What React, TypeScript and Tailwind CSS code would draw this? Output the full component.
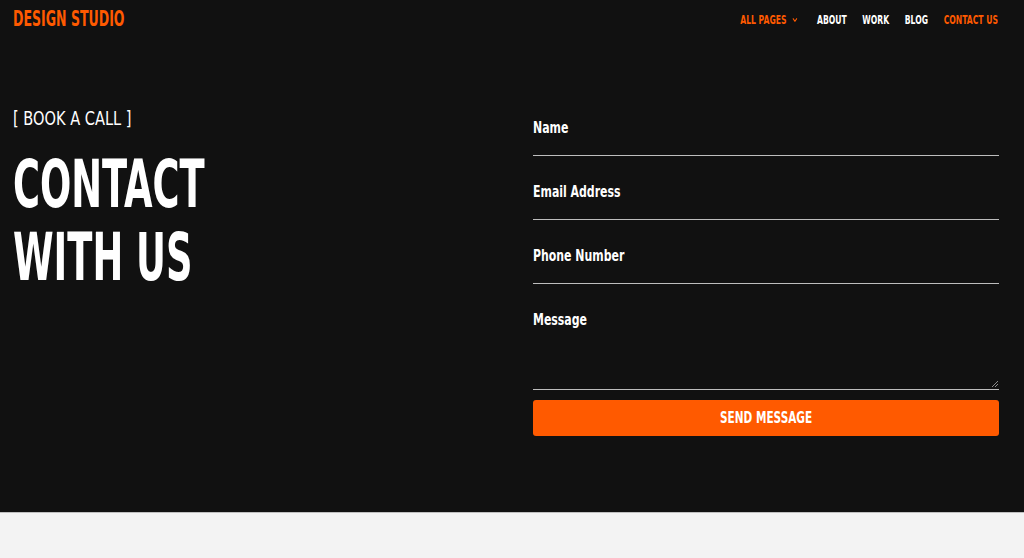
import { ChevronDown } from 'lucide-react';

const font = { fontFamily: '"DejaVu Sans Condensed", "Liberation Sans", sans-serif' };

function Field({ label, tall }: { label: string; tall?: boolean }) {
  return (
    <label
      className={`relative flex flex-col border-b border-[#bdbdbd] ${tall ? 'h-[80px]' : 'h-[38px]'}`}
    >
      <span className="inline-block origin-left scale-x-[0.76] text-[16px] leading-[20px] font-bold text-white whitespace-nowrap">
        {label}
      </span>
      {tall && (
        <svg className="absolute right-[1px] bottom-[2px] w-[6px] h-[6px]" viewBox="0 0 6 6">
          <path d="M6 0 L0 6 M6 3 L3 6" stroke="#8a8a8a" strokeWidth="1" />
        </svg>
      )}
    </label>
  );
}

export default function App() {
  return (
    <div className="w-[1024px] h-[558px] bg-[#f3f3f3] overflow-hidden" style={font}>
      <div className="h-[513px] bg-[#111111] border-b border-[#bfbfbf] flex flex-col">
        <header className="h-[40px] pl-[13px] pr-[26px] flex items-center justify-between">
          <div className="inline-block origin-left scale-x-[0.665] text-[21px] font-bold text-[#ff5a00] whitespace-nowrap">
            DESIGN STUDIO
          </div>
          <nav className="flex items-center gap-[22px] origin-right scale-x-[0.71] text-[12px] font-bold uppercase text-white whitespace-nowrap">
            <span className="flex items-center gap-[7px] mr-[4px] text-[#ff5a00]">
              All Pages <ChevronDown className="w-[10px] h-[10px]" strokeWidth={3} />
            </span>
            <span>About</span>
            <span>Work</span>
            <span>Blog</span>
            <span className="text-[#ff5a00]">Contact Us</span>
          </nav>
        </header>

        <main className="flex pl-[13px] pr-[25px] pt-[66px]">
          <section className="w-[520px] flex flex-col items-start">
            <div className="inline-block origin-left scale-x-[0.81] text-[20px] leading-[24px] text-white whitespace-nowrap">
              [ BOOK A CALL ]
            </div>
            <h1 className="inline-block mt-[18px] origin-left scale-x-[0.62] text-[66px] leading-[73px] font-bold text-white whitespace-nowrap">
              CONTACT
              <br />
              WITH US
            </h1>
          </section>
          <form className="flex-1 flex flex-col gap-[26px] pt-[12px]">
            <Field label="Name" />
            <Field label="Email Address" />
            <Field label="Phone Number" />
            <Field label="Message" tall />
            <button
              type="button"
              className="-mt-[16px] h-[36px] rounded-[3px] bg-[#ff5a00] text-white"
            >
              <span className="inline-block scale-x-[0.73] text-[16px] font-bold uppercase whitespace-nowrap">
                Send Message
              </span>
            </button>
          </form>
        </main>
      </div>
    </div>
  );
}
